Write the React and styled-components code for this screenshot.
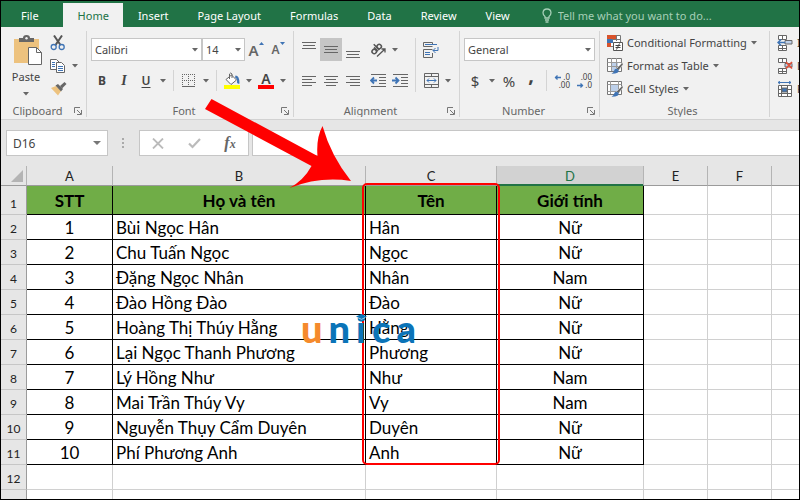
import React from 'react';
import styled, { createGlobalStyle } from 'styled-components';

const GlobalStyle = createGlobalStyle`
  * { box-sizing: border-box; }
  body {
    margin: 0;
    font-family: "Noto Sans", "Open Sans", sans-serif;
    font-size: 11px;
    color: #444; }
  button, input, select {
    font-family: inherit;
    font-size: inherit;
    color: inherit; }
`;

const tabs = ['File', 'Home', 'Insert', 'Page Layout', 'Formulas', 'Data', 'Review', 'View'];

const columns = [
    { name: 'A', width: 86 },
    { name: 'B', width: 253 },
    { name: 'C', width: 131 },
    { name: 'D', width: 147 },
    { name: 'E', width: 64 },
    { name: 'F', width: 64 },
    { name: '' },
];

const headings = ['STT', 'Họ và tên', 'Tên', 'Giới tính'];

const people = [
    ['1', 'Bùi Ngọc Hân', 'Hân', 'Nữ'],
    ['2', 'Chu Tuấn Ngọc', 'Ngọc', 'Nữ'],
    ['3', 'Đặng Ngọc Nhân', 'Nhân', 'Nam'],
    ['4', 'Đào Hồng Đào', 'Đào', 'Nữ'],
    ['5', 'Hoàng Thị Thúy Hằng', 'Hằng', 'Nữ'],
    ['6', 'Lại Ngọc Thanh Phương', 'Phương', 'Nữ'],
    ['7', 'Lý Hồng Như', 'Như', 'Nam'],
    ['8', 'Mai Trần Thúy Vy', 'Vy', 'Nam'],
    ['9', 'Nguyễn Thụy Cẩm Duyên', 'Duyên', 'Nữ'],
    ['10', 'Phí Phương Anh', 'Anh', 'Nữ'],
];

function Caret() {
    return <svg width="6" height="4" viewBox="0 0 6 4"><path d="M0 0h6L3 3.500z" fill="#666" /></svg>;
}

function DropButton({ label }) {
    return <CaretButton aria-label={label}><Caret /></CaretButton>;
}

function Lines({ rows }) {
    return (
        <svg width="14" height="16" viewBox="0 0 14 16" stroke="#666">
            {rows.map(([y, x1, x2]) => <path key={y} d={`M${x1} ${y}.5H${x2}`} />)}
        </svg>
    );
}

function PasteIcon() {
    return (
        <svg width="29" height="31" viewBox="0 0 29 31">
            <path d="M0 4h25v24H0z" fill="#edc27e" />
            <path d="M5 7V3h4q0-3 3.500-3T16 3h4v4z" fill="#666" />
            <circle cx="12.500" cy="3.200" r="1.200" fill="#f1f1f1" />
            <path d="M14.500 12.500h8l5 5v12h-13z" fill="#fff" stroke="#666" />
            <path d="M22.500 12.500v5h5" fill="none" stroke="#666" />
        </svg>
    );
}

function CutIcon() {
    return (
        <svg width="16" height="16" viewBox="0 0 16 16" fill="none">
            <path d="M4 0.500L10.500 10M12 0.500L5.500 10" stroke="#555" strokeWidth="2" />
            <circle cx="3.700" cy="12" r="2.500" stroke="#3f74b5" strokeWidth="1.300" />
            <circle cx="11.700" cy="12" r="2.500" stroke="#3f74b5" strokeWidth="1.300" />
        </svg>
    );
}

function CopyIcon() {
    return (
        <svg width="16" height="16" viewBox="0 0 16 16">
            <path d="M.5 1.500h6l3 3v7h-9z" fill="#fff" stroke="#666" />
            <path d="M2 4.500h3M2 6.500h3M2 8.500h3" stroke="#3f74b5" />
            <path d="M6.500 4.500h5l3 3v7h-8z" fill="#fff" stroke="#666" />
            <path d="M8 8.500h5M8 10.500h5M8 12.500h5" stroke="#3f74b5" />
        </svg>
    );
}

function BrushIcon() {
    return (
        <svg width="17" height="15" viewBox="0 0 17 15">
            <path d="M1 7l5-2 5 5-3 4.500z" fill="#edc27e" />
            <path d="M5.500 4.500l2.500-1.500 5 5-2 2.500z" fill="#666" />
            <path d="M10 5l4.500-4 2 2L12 7.500z" fill="#666" />
        </svg>
    );
}

function BordersIcon() {
    return (
        <svg width="14" height="14" viewBox="0 0 14 14" stroke="#666" fill="none">
            <path d="M.5 0v12M6.500 0v12M12.500 0v12M0 .5h13M0 6.500h13" strokeDasharray="1 1" />
            <path d="M0 12.500h13" />
        </svg>
    );
}

function FillIcon() {
    return (
        <svg width="16" height="17" viewBox="0 0 16 17">
            <path d="M2 7.500L7.500 3l5 5L7 12.500z" fill="#fff" stroke="#666" />
            <path d="M5.500 7V2q1-2 2.500 0v4" fill="none" stroke="#666" />
            <path d="M11.500 3.500q4 0 4 8-1.500 1-2.500-1 .5-4-2-5z" fill="#3f74b5" />
            <path d="M0 13h16v4H0z" fill="#ff0" />
        </svg>
    );
}

function AngleIcon() {
    return (
        <svg width="17" height="16" viewBox="0 0 17 16" fill="none" stroke="#555">
            <g transform="rotate(-45 6 7)" strokeWidth="1.500">
                <circle cx="3" cy="7.500" r="2.200" />
                <path d="M5.800 4.500V10M7.800 2v8" />
                <circle cx="10" cy="7.500" r="2.200" />
            </g>
            <path d="M7 14.500L15 7M11.500 7H15v3.500" strokeWidth="1.300" />
        </svg>
    );
}

function IndentIcon({ flip }) {
    return (
        <svg width="16" height="14" viewBox="0 0 16 14" fill="none" stroke="#666">
            <path d="M1 .5h15M9 3.500h7M9 6.500h7M9 9.500h7M1 12.500h15" />
            <path d={flip ? 'M0 6.500h6M3.500 3.500l3 3-3 3' : 'M7 6.500H1M4 3.500l-3 3 3 3'} stroke="#3f74b5" strokeWidth="1.800" />
        </svg>
    );
}

function WrapIcon() {
    return (
        <svg width="16" height="16" viewBox="0 0 16 16" fill="none" stroke="#666">
            <path d="M9.500 4.500h-9v-4h9v2M9.500 11v4.500h-9v-8h9" />
            <path d="M2 2.500h12M2 10.500h5M2 12.500h5M15 5v3.500h-5M12.500 6L10 8.500l2.500 2.500" stroke="#3f74b5" />
        </svg>
    );
}

function MergeIcon() {
    return (
        <svg width="15" height="15" viewBox="0 0 15 15" fill="none" stroke="#666">
            <path d="M.5.5h14v14H.5zM.5 3.500h14M.5 11.500h14M7.500 0v3.500M7.500 11.500V15" />
            <path d="M3 7.500h9M5 5.500l-2 2 2 2M10 5.500l2 2-2 2" stroke="#3f74b5" />
        </svg>
    );
}

function DecimalIcon({ less }) {
    return (
        <svg width="18" height="18" viewBox="0 0 18 18" fontSize="8" fontFamily="Noto Sans, sans-serif" textAnchor="end" fill="#444">
            <text x="17" y="8">{less ? '.00' : '.0'}</text>
            <text x="17" y="16">{less ? '.0' : '.00'}</text>
            <path d={less ? 'M2 13.500h6M5.500 11.500l2 2-2 2' : 'M8 5.500H2M4.500 3.500l-2 2 2 2'} fill="none" stroke="#3f74b5" strokeWidth="1.300" />
        </svg>
    );
}

function ConditionalIcon() {
    return (
        <svg width="16" height="16" viewBox="0 0 16 16" fill="none">
            <path d="M.5.5h13v11H.5z" fill="#fff" stroke="#777" />
            <path d="M0 0h9v4H0zM0 8h4v4H0z" fill="#d9532c" />
            <path d="M0 4h6v4H0z" fill="#3f74b5" />
            <path d="M9.500 0v6M5 4.500h9" stroke="#777" />
            <path d="M6.500 7.500h9v8h-9z" fill="#fff" stroke="#555" />
            <path d="M8.500 10.500h5M8.500 12.500h5M12.500 8.500l-3 6" stroke="#444" />
        </svg>
    );
}

function StyleIcon({ table }) {
    return (
        <svg width="16" height="16" viewBox="0 0 16 16" fill="none">
            <path d="M.5.5h14v13H.5z" fill="#fff" stroke="#777" />
            <path d={table ? 'M4 5h7v8H4z' : 'M4 4h8v6H4z'} fill="#bdd0ea" />
            <path d={table ? 'M.5 4.500h14M.5 8.500h14M4.500 0v13M9.500 0v13' : 'M.5 3.500h14M.5 10.500h12M3.500 0v13M11.500 0v10'} stroke="#999" />
            <path d="M15.500 4.500l-6 6 2 2 4.500-6z" fill="#666" stroke="#f1f1f1" strokeWidth=".5" />
            <path d="M4.500 15.800q2.500-1 3-4 1.500-2 4 0 1.500 4-7 4z" fill="#3f74b5" />
        </svg>
    );
}

function CellsIcon({ kind }) {
    if (kind === 'Format') {
        return (
            <svg width="16" height="16" viewBox="0 0 16 16" fill="none" stroke="#666">
                <path d="M1 1.500h13M3 0L1 1.500 3 3M12 0l2 1.500L12 3" stroke="#3f74b5" />
                <path d="M1.500 4.500h13v11h-13zM1.500 8.500h13M1.500 12.500h13M4.500 4.500v11M10.500 4.500v11" fill="#fff" />
                <path d="M5 7h5v4H5z" fill="#3f74b5" />
            </svg>
        );
    }
    return (
        <svg width="16" height="16" viewBox="0 0 16 16" fill="none" stroke="#666">
            <path d="M1.500.5h8v4h-8zM5.500.5v4M1.500 10.500h8v5h-8zM5.500 10.500v5M1.500 13.500h8" fill="#fff" />
            <path d="M8 5.500h7v3.500H8z" fill="#bdd0ea" />
            {kind === 'Insert'
                ? <path d="M8 7.500H1M4 4.500l-3 3 3 3" stroke="#3f74b5" strokeWidth="1.500" />
                : <path d="M9 4l6 6.500M15 4l-6 6.500" stroke="#e0523a" strokeWidth="1.800" />}
        </svg>
    );
}

function Launcher({ name }) {
    return (
        <LaunchButton aria-label={`${name} settings`}>
            <svg width="8" height="8" viewBox="0 0 8 8" fill="none" stroke="#777">
                <path d="M.5 6V.5H6M3 3l4 4M7.500 3v4.500H3" />
            </svg>
        </LaunchButton>
    );
}

function RibbonGroup({ name, width, launcher, children }) {
    return (
        <Group $width={width}>
            <GroupBody>{children}</GroupBody>
            <GroupFooter>
                <span>{name}</span>
                {launcher && <Launcher name={name} />}
            </GroupFooter>
        </Group>
    );
}

function Dropdown({ label, value, width }) {
    return (
        <SelectWrap $width={width}>
            <select aria-label={label} defaultValue={value}>
                <option>{value}</option>
            </select>
            <Caret />
        </SelectWrap>
    );
}

function Ribbon() {
    return (
        <RibbonBar>
            <RibbonGroup name="Clipboard" width={86} launcher>
                <ClipboardTools>
                    <PasteButton>
                        <PasteIcon />
                        Paste
                        <Caret />
                    </PasteButton>
                    <ClipboardSide>
                        <ToolButton aria-label="Cut"><CutIcon /></ToolButton>
                        <Row>
                            <ToolButton aria-label="Copy"><CopyIcon /></ToolButton>
                            <DropButton label="Copy options" />
                        </Row>
                        <ToolButton aria-label="Format Painter"><BrushIcon /></ToolButton>
                    </ClipboardSide>
                </ClipboardTools>
            </RibbonGroup>

            <RibbonGroup name="Font" width={207} launcher>
                <Stack>
                    <Row>
                        <Dropdown label="Font" value="Calibri" width={111} />
                        <Dropdown label="Font size" value="14" width={43} />
                        <LetterButton aria-label="Increase font size" $size={15}>
                            A<svg width="5" height="3" viewBox="0 0 5 3"><path d="M0 3h5L2.500 0z" fill="#3f74b5" /></svg>
                        </LetterButton>
                        <LetterButton aria-label="Decrease font size" $size={12}>
                            A<svg width="5" height="3" viewBox="0 0 5 3"><path d="M0 0h5L2.500 3z" fill="#3f74b5" /></svg>
                        </LetterButton>
                    </Row>
                    <Row>
                        <ToolButton><Bold>B</Bold></ToolButton>
                        <ToolButton><SerifItalic>I</SerifItalic></ToolButton>
                        <ToolButton><Underlined>U</Underlined></ToolButton>
                        <DropButton label="Underline options" />
                        <Separator />
                        <ToolButton aria-label="Borders"><BordersIcon /></ToolButton>
                        <DropButton label="Border options" />
                        <Separator />
                        <ToolButton aria-label="Fill colour"><FillIcon /></ToolButton>
                        <DropButton label="Fill options" />
                        <ToolButton aria-label="Font colour"><FontColour>A</FontColour></ToolButton>
                        <DropButton label="Font colour options" />
                    </Row>
                </Stack>
            </RibbonGroup>

            <RibbonGroup name="Alignment" width={166} launcher>
                <Stack>
                    <Row>
                        <ToolButton aria-label="Top align"><Lines rows={[[0, 0, 14], [3, 1, 13], [6, 0, 14]]} /></ToolButton>
                        <ToolButton aria-label="Middle align" $active><Lines rows={[[4, 0, 14], [7, 1, 13], [10, 0, 14]]} /></ToolButton>
                        <ToolButton aria-label="Bottom align"><Lines rows={[[9, 0, 14], [12, 1, 13], [15, 0, 14]]} /></ToolButton>
                        <Spacer />
                        <ToolButton aria-label="Orientation"><AngleIcon /></ToolButton>
                        <DropButton label="Orientation options" />
                    </Row>
                    <Row>
                        <ToolButton aria-label="Align left"><Lines rows={[[3, 0, 14], [6, 0, 10], [9, 0, 14], [12, 0, 10]]} /></ToolButton>
                        <ToolButton aria-label="Center"><Lines rows={[[3, 0, 14], [6, 2, 12], [9, 0, 14], [12, 2, 12]]} /></ToolButton>
                        <ToolButton aria-label="Align right"><Lines rows={[[3, 0, 14], [6, 4, 14], [9, 0, 14], [12, 4, 14]]} /></ToolButton>
                        <Spacer />
                        <ToolButton aria-label="Decrease indent"><IndentIcon /></ToolButton>
                        <ToolButton aria-label="Increase indent"><IndentIcon flip /></ToolButton>
                    </Row>
                </Stack>
                <Separator $tall />
                <Stack $flush>
                    <Row><ToolButton aria-label="Wrap text"><WrapIcon /></ToolButton></Row>
                    <Row>
                        <ToolButton aria-label="Merge and center"><MergeIcon /></ToolButton>
                        <DropButton label="Merge options" />
                    </Row>
                </Stack>
            </RibbonGroup>

            <RibbonGroup name="Number" width={140} launcher>
                <Stack>
                    <Row><Dropdown label="Number format" value="General" width={131} /></Row>
                    <Row>
                        <ToolButton><Sign>$</Sign></ToolButton>
                        <DropButton label="Currency options" />
                        <ToolButton><Sign>%</Sign></ToolButton>
                        <ToolButton><Sign $bold>,</Sign></ToolButton>
                        <Separator />
                        <ToolButton aria-label="Increase decimal"><DecimalIcon /></ToolButton>
                        <ToolButton aria-label="Decrease decimal"><DecimalIcon less /></ToolButton>
                    </Row>
                </Stack>
            </RibbonGroup>

            <RibbonGroup name="Styles" width={170}>
                <CommandList>
                    <Command><ConditionalIcon />Conditional Formatting<Caret /></Command>
                    <Command><StyleIcon table />Format as Table<Caret /></Command>
                    <Command><StyleIcon />Cell Styles<Caret /></Command>
                </CommandList>
            </RibbonGroup>

            <RibbonGroup>
                <CommandList>
                    <Command><CellsIcon kind="Insert" />Insert</Command>
                    <Command><CellsIcon kind="Delete" />Delete</Command>
                    <Command><CellsIcon kind="Format" />Format</Command>
                </CommandList>
            </RibbonGroup>
        </RibbonBar>
    );
}

function FormulaBar() {
    return (
        <FormulaRow>
            <NameBox>
                <input aria-label="Name box" defaultValue="D16" />
                <CaretButton aria-label="Named cells">
                    <svg width="8" height="4" viewBox="0 0 8 4"><path d="M0 0h8L4 4z" fill="#777" /></svg>
                </CaretButton>
            </NameBox>
            <svg width="3" height="11" viewBox="0 0 3 11" fill="#aaa">
                <path d="M0 0h2v2H0zM0 4h2v2H0zM0 8h2v2H0z" />
            </svg>
            <FormulaTools>
                <button aria-label="Cancel">
                    <svg width="12" height="11" viewBox="0 0 12 11" fill="none" stroke="#bbb" strokeWidth="1.800"><path d="M1 .5l10 10M11 .5l-10 10" /></svg>
                </button>
                <button aria-label="Enter">
                    <svg width="13" height="11" viewBox="0 0 13 11" fill="none" stroke="#bbb" strokeWidth="2.200"><path d="M1 5.500L4.500 9 12 1" /></svg>
                </button>
                <button aria-label="Insert function"><Fx>f<small>x</small></Fx></button>
            </FormulaTools>
            <FormulaInput aria-label="Formula" />
        </FormulaRow>
    );
}

function Sheet() {
    return (
        <SheetArea>
            <Grid>
                <colgroup>
                    <Col $width={26} />
                    {columns.map((c, i) => <Col key={i} $width={c.width} />)}
                </colgroup>
                <thead>
                    <tr>
                        <Corner><svg width="12" height="12" viewBox="0 0 12 12"><path d="M12 0v12H0z" fill="#b4b4b4" /></svg></Corner>
                        {columns.map((c, i) => <ColumnHead key={i} scope="col" $selected={c.name === 'D'}>{c.name}</ColumnHead>)}
                    </tr>
                </thead>
                <tbody>
                    <tr>
                        <RowHead scope="row">1</RowHead>
                        {headings.map((h) => <HeadingCell key={h}>{h}</HeadingCell>)}
                        <Cell /><Cell /><Cell />
                    </tr>
                    {people.map((person, i) => (
                        <tr key={person[0]}>
                            <RowHead scope="row">{i + 2}</RowHead>
                            {person.map((value, j) => (
                                <Cell key={j} $filled $center={j === 0 || j === 3}>{value}</Cell>
                            ))}
                            <Cell /><Cell /><Cell />
                        </tr>
                    ))}
                    {['12', ''].map((n) => (
                        <tr key={n}>
                            <RowHead scope="row">{n}</RowHead>
                            {columns.map((c, i) => <Cell key={i} />)}
                        </tr>
                    ))}
                </tbody>
            </Grid>
            <Highlight />
            <Logo>
                <span>u</span>
                <span>n</span>
                <span>
                    i
                    <svg width="11" height="8" viewBox="0 0 11 8">
                        <path d="M0 2.500L5.500 0 11 2.500 5.500 5z" fill="#0b74b8" />
                        <path d="M2 3.500q3.500 3 7 0v2.500q-3.500 2.500-7 0z" fill="#0b74b8" />
                        <path d="M1.500 3.500L5.500 5.300l4-1.800" fill="none" stroke="#fff" strokeWidth=".6" />
                    </svg>
                </span>
                <span>c</span>
                <span>a</span>
            </Logo>
        </SheetArea>
    );
}

export default function App() {
    return (
        <Window>
            <GlobalStyle />
            <TabBar>
                {tabs.map((tab) => <Tab key={tab} href="#" $active={tab === 'Home'}>{tab}</Tab>)}
                <TellMe>
                    <svg width="10" height="15" viewBox="0 0 10 15" fill="none" stroke="#a6cfb7" strokeWidth="1.300">
                        <path d="M3 10V8.500Q1 7 1 4.800 1.300 1 5 1t4 3.800Q9 7 7 8.500V10zM3 12h4M3.500 14h3" />
                    </svg>
                    <input aria-label="Tell me" placeholder="Tell me what you want to do..." />
                </TellMe>
            </TabBar>
            <Ribbon />
            <FormulaBar />
            <Sheet />
            <Arrow width="146" height="90" viewBox="0 0 146 90">
                <path d="M6.500 0L112.500 57Q111 39 117.500 27Q126 57 146 82Q115 77 84.500 89Q99 81 106.500 67L0 10z" fill="#f00" />
            </Arrow>
        </Window>
    );
}

const Window = styled.div`
  position: relative;
  display: flex;
  flex-direction: column;
  height: 100vh;
  overflow: hidden;
  border: 1px solid #000;
  background: #e6e6e6;
`;

const TabBar = styled.nav`
  display: flex;
  height: 26px;
  padding: 2px 0 0 2px;
  background: #217346;
`;

const Tab = styled.a`
  display: flex;
  align-items: center;
  padding: 0 14px 0 15px;
  white-space: nowrap;
  text-decoration: none;
  color: ${(p) => (p.$active ? '#217346' : '#fff')};
  background: ${(p) => (p.$active ? '#f1f1f1' : 'transparent')};

  &:first-child { padding: 0 24px 0 18px; }
`;

const TellMe = styled.label`
  display: flex;
  flex: 1;
  align-items: center;
  gap: 6px;
  padding-left: 18px;

  input {
    flex: 1;
    min-width: 0;
    padding: 0;
    border: 0;
    outline: 0;
    background: transparent;
  }
  input::placeholder { color: #a6cfb7; }
`;

const RibbonBar = styled.div`
  display: flex;
  height: 93px;
  padding: 4px 0 2px;
  overflow: hidden;
  border-bottom: 1px solid #d2d2d2;
  background: #f1f1f1;
`;

const Group = styled.section`
  display: flex;
  flex-direction: column;
  flex: ${(p) => (p.$width ? `0 0 ${p.$width}px` : '1 1 0')};
  min-width: 0;
  overflow: hidden;
  border-right: ${(p) => (p.$width ? '1px solid #d4d4d4' : '0')};
`;

const GroupBody = styled.div`
  display: flex;
  flex: 1;
`;

const GroupFooter = styled.div`
  display: flex;
  align-items: center;
  height: 12px;
  padding-right: 4px;
  line-height: 12px;
  color: #666;

  span {
    flex: 1;
    text-align: center;
  }
`;

const LaunchButton = styled.button`
  display: flex;
  padding: 0;
  border: 0;
  background: none;
`;

const Stack = styled.div`
  display: flex;
  flex-direction: column;
  gap: 8px;
  padding: 7px 0 0 ${(p) => (p.$flush ? '0' : '4px')};
`;

const Row = styled.div`
  display: flex;
  align-items: center;
  height: 23px;
`;

const ToolButton = styled.button`
  display: flex;
  align-items: center;
  justify-content: center;
  width: 22px;
  height: 23px;
  padding: 0;
  border: 0;
  background: ${(p) => (p.$active ? '#c5c5c5' : 'none')};
`;

const CaretButton = styled.button`
  display: flex;
  align-items: center;
  justify-content: center;
  width: 12px;
  height: 23px;
  padding: 0;
  border: 0;
  background: none;
`;

const LetterButton = styled(ToolButton)`
  font-size: ${(p) => p.$size}px;
  font-weight: 600;
  color: #666;

  svg {
    align-self: flex-start;
    margin-top: 4px;
  }
`;

const Bold = styled.b`
  font-size: 12px;
`;

const SerifItalic = styled.i`
  font-family: "Liberation Serif", serif;
  font-size: 14px;
  font-weight: bold;
`;

const Underlined = styled.u`
  font-size: 12px;
  font-weight: 600;
  text-underline-offset: 2px;
`;

const FontColour = styled.span`
  width: 16px;
  font-size: 14px;
  font-weight: 600;
  line-height: 13px;
  border-bottom: 4px solid #f00;
`;

const Sign = styled.span`
  font-size: ${(p) => (p.$bold ? '20px' : '15px')};
  font-weight: ${(p) => (p.$bold ? 'bold' : 'normal')};
  line-height: ${(p) => (p.$bold ? '10px' : '20px')};
  padding-bottom: ${(p) => (p.$bold ? '12px' : '0')};
`;

const Separator = styled.div`
  width: 1px;
  height: ${(p) => (p.$tall ? '54px' : '21px')};
  margin: ${(p) => (p.$tall ? '7px 4px 0' : '0 4px')};
  background: #d4d4d4;
`;

const Spacer = styled.div`
  width: 3px;
`;

const SelectWrap = styled.div`
  position: relative;
  width: ${(p) => p.$width}px;
  height: 23px;

  select {
    width: 100%;
    height: 100%;
    padding: 0 4px 0 3px;
    border: 1px solid #c6c6c6;
    border-radius: 0;
    appearance: none;
    background: #fff;
  }
  svg {
    position: absolute;
    top: 10px;
    right: 4px;
    pointer-events: none;
  }
`;

const ClipboardTools = styled.div`
  display: flex;
  gap: 4px;
  padding: 0 0 0 8px;
`;

const PasteButton = styled.button`
  display: flex;
  flex-direction: column;
  align-items: center;
  width: 34px;
  gap: 2px;
  padding: 4px 0 0;
  border: 0;
  line-height: 18px;
  background: none;

  svg:first-child { margin-left: 4px; }
  svg:last-child { margin-top: 4px; }
`;

const ClipboardSide = styled.div`
  display: flex;
  flex-direction: column;
`;

const CommandList = styled.div`
  display: flex;
  flex-direction: column;
  padding-left: 7px;
`;

const Command = styled.button`
  display: flex;
  align-items: center;
  gap: 4px;
  height: 23px;
  padding: 0;
  border: 0;
  white-space: nowrap;
  background: none;

  svg { flex-shrink: 0; }
`;

const FormulaRow = styled.div`
  display: flex;
  align-items: center;
  height: 46px;
  padding: 0 0 0 5px;

  > svg { margin: 0 14px; }
`;

const NameBox = styled.div`
  display: flex;
  align-items: center;
  width: 102px;
  height: 26px;
  border: 1px solid #c6c6c6;
  background: #fff;

  input {
    flex: 1;
    min-width: 0;
    padding: 0 6px;
    border: 0;
    font-size: 12px;
    background: none;
  }
  button { width: 20px; }
`;

const FormulaTools = styled.div`
  display: flex;
  width: 110px;
  height: 26px;
  border: 1px solid #c6c6c6;
  background: #fff;

  button {
    display: flex;
    flex: 1;
    align-items: center;
    justify-content: center;
    padding: 0;
    border: 0;
    background: none;
  }
`;

const Fx = styled.i`
  font-family: "Liberation Serif", serif;
  font-size: 16px;
  font-weight: bold;
  color: #666;

  small { font-size: 12px; }
`;

const FormulaInput = styled.input`
  flex: 1;
  min-width: 0;
  height: 26px;
  margin-left: 3px;
  border: 1px solid #c6c6c6;
  border-right: 0;
  background: #fff;
`;

const SheetArea = styled.main`
  position: relative;
  flex: 1;
  min-height: 0;
  overflow: hidden;
  background: #fff;
`;

const Grid = styled.table`
  width: 100%;
  table-layout: fixed;
  border-collapse: separate;
  border-spacing: 0;
  font-family: Lato, "Noto Sans", sans-serif;
  color: #000;
`;

const Col = styled.col`
  width: ${(p) => (p.$width ? `${p.$width}px` : 'auto')};
`;

const Corner = styled.td`
  height: 20px;
  padding: 0 3px 3px 0;
  border-right: 1px solid #b4b4b4;
  border-bottom: 1px solid #9b9b9b;
  text-align: right;
  vertical-align: bottom;
  background: #e6e6e6;

  svg { display: block; margin-left: auto; }
`;

const ColumnHead = styled.th`
  height: 20px;
  padding: 0;
  border-right: 1px solid #b4b4b4;
  border-bottom: 1px solid ${(p) => (p.$selected ? '#217346' : '#9b9b9b')};
  box-shadow: ${(p) => (p.$selected ? 'inset 0 -1px #217346' : 'none')};
  font-size: 13px;
  font-weight: normal;
  line-height: 18px;
  color: ${(p) => (p.$selected ? '#217346' : '#222')};
  background: ${(p) => (p.$selected ? '#d2d2d2' : '#e6e6e6')};

  &:last-child { border-right: 0; }
`;

const RowHead = styled.th`
  height: 25px;
  padding: 0;
  border-right: 1px solid #9b9b9b;
  border-bottom: 1px solid #c6c6c6;
  font-size: 12px;
  font-weight: normal;
  line-height: 20px;
  vertical-align: bottom;
  color: #222;
  background: #e6e6e6;
`;

const Cell = styled.td`
  height: 25px;
  padding: 2px 3px 0;
  border-right: 1px solid ${(p) => (p.$filled ? '#000' : '#d0d0d0')};
  border-bottom: 1px solid ${(p) => (p.$filled ? '#000' : '#d0d0d0')};
  font-size: 17px;
  line-height: 20px;
  white-space: nowrap;
  text-align: ${(p) => (p.$center ? 'center' : 'left')};

  &:last-child { border-right: 0; }
`;

const HeadingCell = styled(Cell)`
  height: 29px;
  border-color: #000;
  font-weight: bold;
  text-align: center;
  background: #70ad47;
`;

/* red frame round column C */
const Highlight = styled.div`
  position: absolute;
  top: 17px;
  left: 361px;
  width: 138px;
  height: 282px;
  border: 2px solid #f00;
  border-radius: 5px;
`;

const Logo = styled.div`
  position: absolute;
  top: 142px;
  left: 300px;
  display: flex;
  gap: 6px;
  font-family: Lato, sans-serif;
  font-size: 38px;
  font-weight: 900;
  line-height: 40px;
  color: #0b74b8;

  span { position: relative; }
  span:first-child { color: #f58a2c; }
  svg {
    position: absolute;
    top: 6px;
    left: 0;
  }
`;

const Arrow = styled.svg`
  position: absolute;
  top: 98px;
  left: 204px;
`;
